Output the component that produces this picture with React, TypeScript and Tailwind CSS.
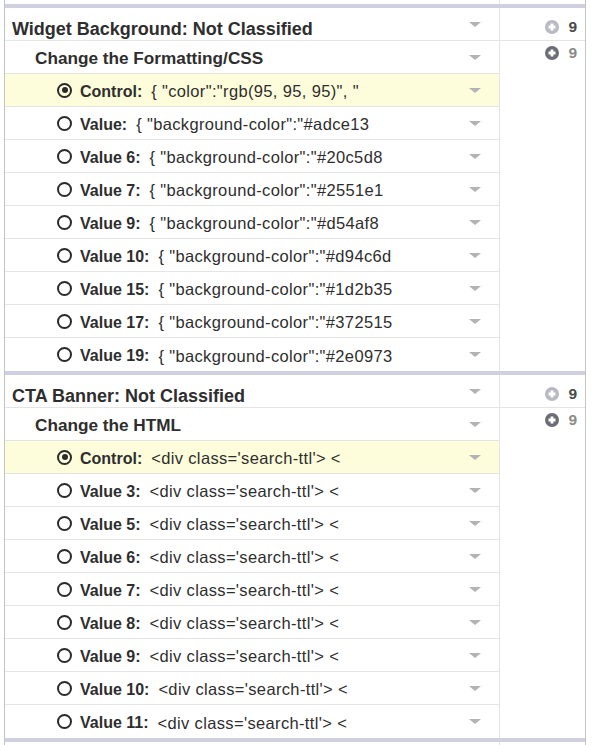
const FONT = "font-['Liberation_Sans',Arial,sans-serif]";

type Row = { label: string; value: string; checked?: boolean };

const cssRows: Row[] = [
  { label: "Control:", value: '{ "color":"rgb(95, 95, 95)", "', checked: true },
  { label: "Value:", value: '{ "background-color":"#adce13' },
  { label: "Value 6:", value: '{ "background-color":"#20c5d8' },
  { label: "Value 7:", value: '{ "background-color":"#2551e1' },
  { label: "Value 9:", value: '{ "background-color":"#d54af8' },
  { label: "Value 10:", value: '{ "background-color":"#d94c6d' },
  { label: "Value 15:", value: '{ "background-color":"#1d2b35' },
  { label: "Value 17:", value: '{ "background-color":"#372515' },
  { label: "Value 19:", value: '{ "background-color":"#2e0973' },
];

const html = "<div class='search-ttl'> <";
const htmlRows: Row[] = [
  { label: "Control:", value: html, checked: true },
  { label: "Value 3:", value: html },
  { label: "Value 5:", value: html },
  { label: "Value 6:", value: html },
  { label: "Value 7:", value: html },
  { label: "Value 8:", value: html },
  { label: "Value 9:", value: html },
  { label: "Value 10:", value: html },
  { label: "Value 11:", value: html },
];

const sections = [
  { title: "Widget Background: Not Classified", change: "Change the Formatting/CSS", rows: cssRows },
  { title: "CTA Banner: Not Classified", change: "Change the HTML", rows: htmlRows },
];

function Caret() {
  return (
    <span className="ml-auto mr-[18px] w-0 h-0 border-x-[6px] border-x-transparent border-t-[5px] border-t-[#b3b3b3]" />
  );
}

function Radio({ checked }: { checked?: boolean }) {
  return (
    <span className="w-[15px] h-[15px] rounded-full border-2 border-[#2b2b2b] flex items-center justify-center shrink-0">
      {checked && <span className="w-[6px] h-[6px] rounded-full bg-[#2b2b2b]" />}
    </span>
  );
}

function Badge({ light }: { light?: boolean }) {
  return (
    <div className="flex items-center justify-end pr-[8px] gap-[9px]">
      <svg width="14" height="14" viewBox="0 0 14 14" className="shrink-0 block">
        <circle cx="7" cy="7" r="7" fill={light ? "#b9b9c6" : "#6c6c78"} />
        <path d="M7 3.5v7M3.5 7h7" stroke="#fff" strokeWidth="2.8" />
      </svg>
      <span className={`text-[15.5px] font-bold leading-[12px] ${light ? "text-[#4a4a4a]" : "text-[#8a8a8a]"}`}>9</span>
    </div>
  );
}

export default function App() {
  return (
    <div className={`${FONT} bg-white min-h-screen text-[#2e2e2e]`}>
      <div className="ml-[4px] w-[582px] border-x border-[#c4c4c4]">
        {/* strip above first band */}
        <div className="flex h-[4px]">
          <div className="w-[494px]" />
          <div className="flex-1 border-l border-[#e4e4e4]" />
        </div>

        {sections.map((s) => (
          <div key={s.title} className="flex border-t-4 border-[#d0d0e0]">
            <div className="w-[494px]">
              <div className="h-[33px] border-b border-[#e4e4e4] flex items-center pl-[7px] pt-[10px]">
                <span className="text-[18px] font-bold whitespace-nowrap">{s.title}</span>
                <span className="-mt-[10px] ml-auto flex">
                  <Caret />
                </span>
              </div>
              <div className="h-[33px] border-b border-[#e4e4e4] flex items-center pl-[30px] pt-[3px]">
                <span className="text-[17.2px] font-bold whitespace-nowrap">{s.change}</span>
                <span className="-mt-[3px] ml-auto flex">
                  <Caret />
                </span>
              </div>
              {s.rows.map((r, i) => (
                <div
                  key={r.label}
                  className={`h-[33px] flex items-center pl-[52px] ${
                    i < s.rows.length - 1 ? "border-b border-[#e4e4e4]" : ""
                  } ${r.checked ? "bg-[#fdfddc]" : ""}`}
                >
                  <Radio checked={r.checked} />
                  <span className="ml-[8px] text-[16px] font-bold pt-[3px] whitespace-nowrap">{r.label}</span>
                  <span className="ml-[9px] text-[16.5px] tracking-[0.35px] pt-[3px] whitespace-nowrap">{r.value}</span>
                  <Caret />
                </div>
              ))}
            </div>
            <div className="flex-1 border-l border-[#e4e4e4]">
              <div className="h-[33px] border-b border-[#e4e4e4] pt-[12px]">
                <Badge light />
              </div>
              <div className="pt-[5px]">
                <Badge />
              </div>
            </div>
          </div>
        ))}

        <div className="flex border-t-4 border-[#d0d0e0] h-[20px]">
          <div className="w-[494px]" />
          <div className="flex-1 border-l border-[#e4e4e4]" />
        </div>
      </div>
    </div>
  );
}
